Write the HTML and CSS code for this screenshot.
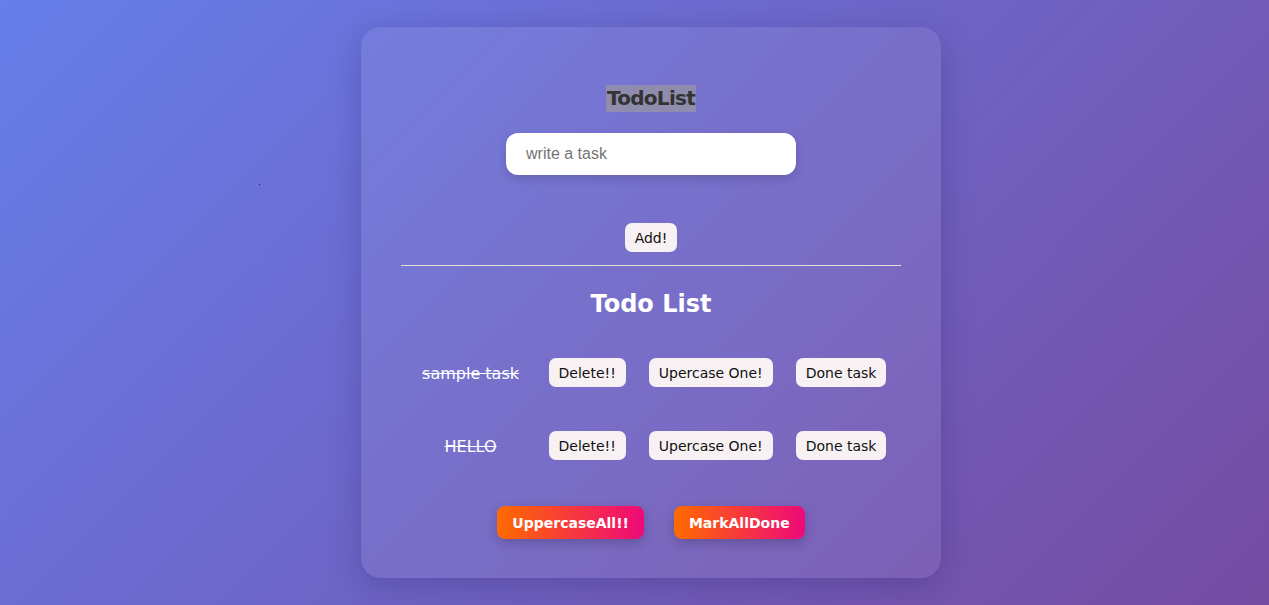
FILE: index.html
```html
<!DOCTYPE html>
<html>
<head>
<meta charset="utf-8">
<title>TodoList</title>
<link rel="stylesheet" href="styles.css">
</head>
<body>
<span class="dot"></span>
<div class="card">
  <h1 class="title">TodoList</h1>
  <div class="form">
    <input class="task-input" type="text" placeholder="write a task">
    <button class="btn">Add!</button>
  </div>
  <hr class="divider">
  <h2 class="list-title">Todo List</h2>
  <ul class="list">
    <li class="row">
      <span class="task done">sample task</span>
      <button class="btn">Delete!!</button>
      <button class="btn">Upercase One!</button>
      <button class="btn">Done task</button>
    </li>
    <li class="row">
      <span class="task done">HELLO</span>
      <button class="btn">Delete!!</button>
      <button class="btn">Upercase One!</button>
      <button class="btn">Done task</button>
    </li>
  </ul>
  <div class="actions">
    <button class="action">UppercaseAll!!</button>
    <button class="action">MarkAllDone</button>
  </div>
</div>
</body>
</html>
```

FILE: styles.css
```css
html, body {
  margin: 0;
  padding: 0;
}
body {
  min-height: 100vh;
  background: linear-gradient(135deg, #667eea 0%, #764ba2 100%);
  font-family: "DejaVu Sans", Verdana, sans-serif;
  position: relative;
  overflow: hidden;
  padding: 27px 0 0 33px;
  box-sizing: border-box;
}
.dot {
  position: absolute;
  left: 259px;
  top: 184px;
  width: 1px;
  height: 1px;
  background: #1a1a4a;
}
.card {
  width: 580px;
  margin: 0 auto;
  box-sizing: border-box;
  padding: 58px 40px 39px;
  background: rgba(255, 255, 255, 0.07);
  border-radius: 20px;
  box-shadow: 0 8px 32px rgba(20, 20, 80, 0.22);
  display: flex;
  flex-direction: column;
  align-items: center;
}
.title {
  margin: 0;
  font-size: 20px;
  line-height: 27px;
  font-weight: bold;
  color: #333;
  background: #8f8cae;
  padding: 0 1px;
  letter-spacing: -0.7px;
}
.form {
  display: flex;
  flex-direction: column;
  align-items: center;
  margin-top: 21px;
}
.task-input {
  width: 290px;
  height: 42px;
  box-sizing: border-box;
  border: none;
  border-radius: 12px;
  padding: 0 20px;
  font-family: "Liberation Sans", Arial, sans-serif;
  font-size: 16px;
  color: #333;
  background: #fff;
  box-shadow: 0 4px 10px rgba(0, 0, 0, 0.15);
  outline: none;
}
.task-input::placeholder {
  color: #757575;
}
.form .btn {
  margin-top: 48px;
}
.btn {
  font-family: "DejaVu Sans", Verdana, sans-serif;
  font-size: 14px;
  height: 29px;
  padding: 0 10px;
  border: none;
  border-radius: 7px;
  background: #f7f1f4;
  color: #111;
  cursor: pointer;
}
.divider {
  width: 500px;
  margin: 13px 0 0;
  border: none;
  border-top: 1px solid #e4e2d8;
}
.list-title {
  margin: 24px 0 0;
  font-size: 24px;
  line-height: 28px;
  color: #fff;
}
.list {
  list-style: none;
  margin: 40px 0 0;
  padding: 0;
  display: flex;
  flex-direction: column;
  gap: 44px;
}
.row {
  display: flex;
  align-items: center;
  gap: 23px;
}
.task {
  width: 110px;
  text-align: center;
  color: #fff;
  font-size: 16px;
  padding-top: 2px;
}
.task.done {
  text-decoration: line-through;
}
.actions {
  display: flex;
  gap: 30px;
  margin-top: 46px;
}
.action {
  font-family: "DejaVu Sans", Verdana, sans-serif;
  font-size: 14px;
  font-weight: bold;
  color: #fff;
  height: 33px;
  padding: 0 15px;
  border: none;
  border-radius: 8px;
  background: linear-gradient(90deg, #ff6a00, #ee0979);
  box-shadow: 0 4px 12px rgba(0, 0, 0, 0.2);
  cursor: pointer;
}
```
